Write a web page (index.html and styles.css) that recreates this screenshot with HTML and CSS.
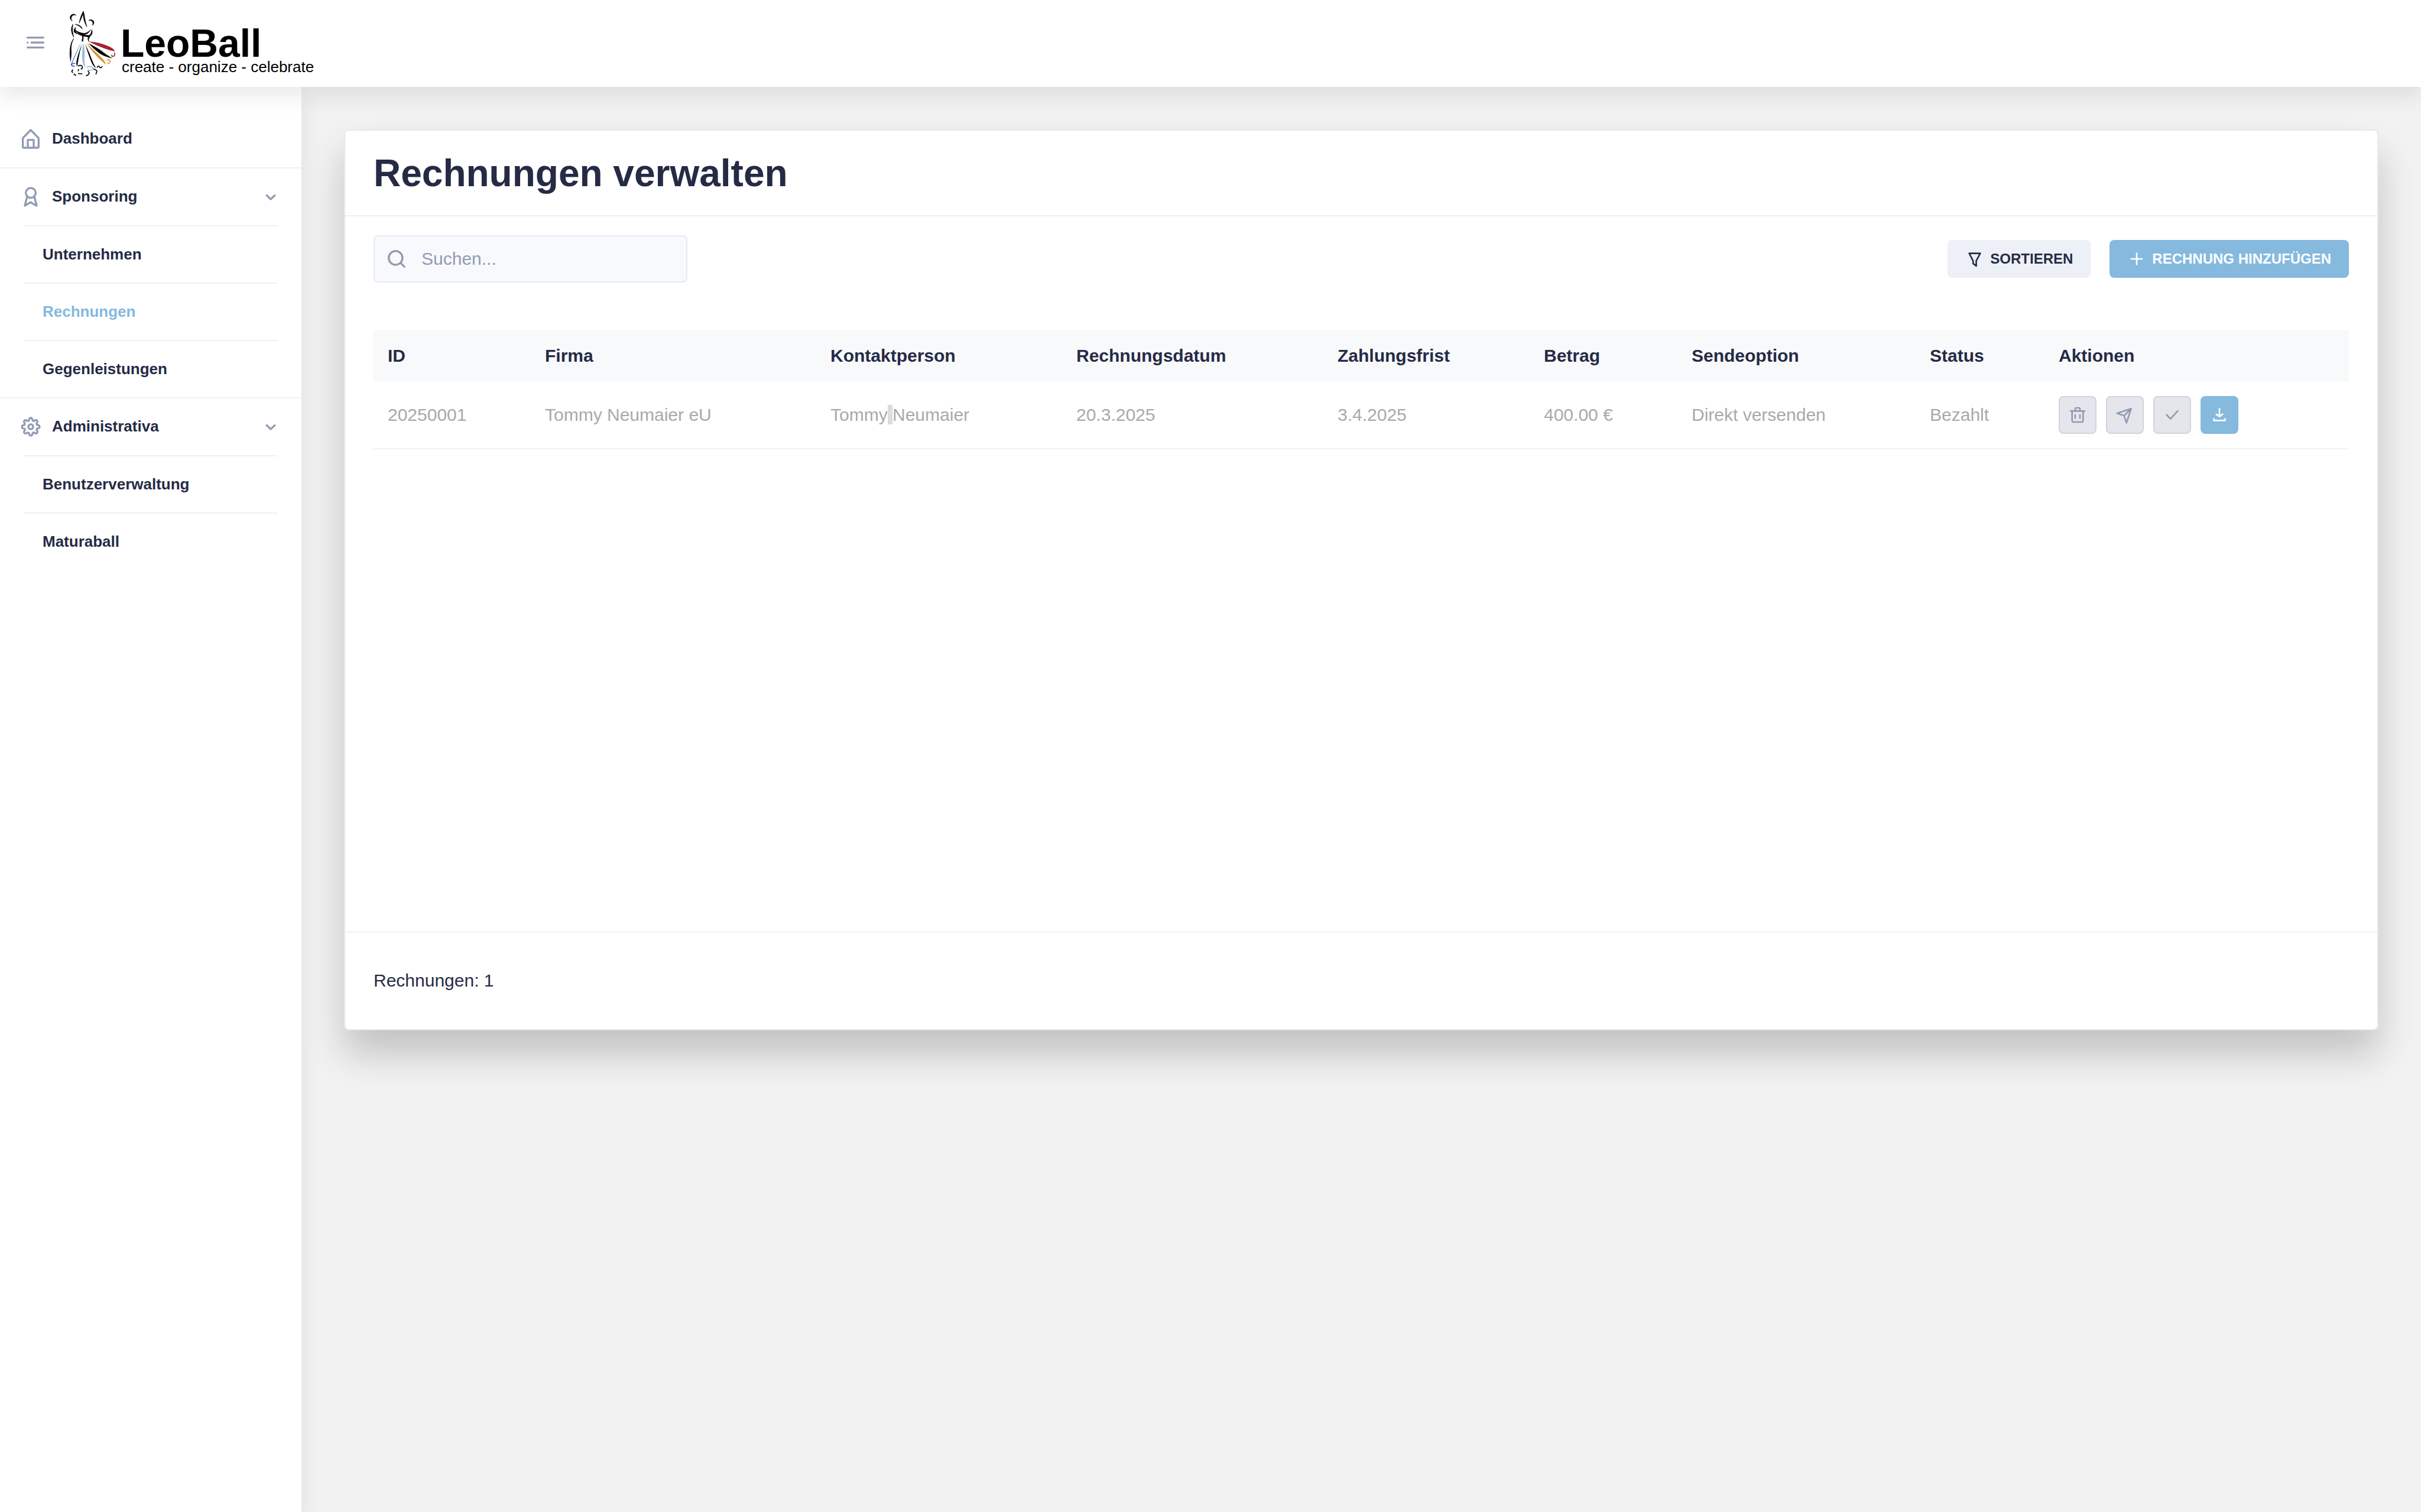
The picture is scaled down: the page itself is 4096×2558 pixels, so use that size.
FILE: index.html
```html
<!DOCTYPE html>
<html lang="de">
<head>
<meta charset="utf-8">
<meta name="viewport" content="width=device-width, initial-scale=1">
<title>LeoBall – Rechnungen verwalten</title>
<link rel="stylesheet" href="styles.css">
</head>
<body>
<header class="header">
  <button class="menu-toggle" type="button" aria-label="Menü">
    <svg class="icon" viewBox="0 0 24 24"><circle cx="4" cy="12" r="1"/><rect x="7" y="11" width="14" height="2" rx="1"/><rect x="3" y="16" width="18" height="2" rx="1"/><rect x="3" y="6" width="18" height="2" rx="1"/></svg>
  </button>
  <a class="logo" href="#">
    <svg class="logo-figure" viewBox="50 20 246 336" aria-hidden="true">
      <path class="body" d="M88 46Q72 34 61 48Q52 62 68 76Q60 62 66 52Q74 42 88 46Z"/>
      <path class="body" d="M125 27Q110 50 104 86Q116 62 126 32Z"/>
      <path class="body" d="M125 27Q130 40 132 60Q136 85 143 105Q130 85 126 60Q124 40 122 34Z"/>
      <path class="body" d="M152 72Q168 64 178 78Q182 88 172 98Q176 84 170 78Q162 70 152 72Z"/>
      <path class="body" d="M72 92Q54 120 76 158Q66 122 72 92Z"/>
      <path class="body" d="M84 92Q112 94 120 116Q104 98 84 92Z"/>
      <path class="body" d="M86 108Q74 118 78 130Q80 136 92 140Q80 124 86 108Z"/>
      <path class="body" d="M80 120Q100 134 124 138Q144 140 162 120Q148 146 124 145Q98 142 80 120Z"/>
      <path class="body" d="M82 132Q110 148 158 149L156 157Q110 154 82 132Z"/>
      <path class="body" d="M168 120Q176 140 157 156Q150 166 152 180Q144 166 152 154Q168 138 168 120Z"/>
      <path class="body" d="M120 152Q122 165 117 178L123 178Q126 165 125 152Z"/>
      <path class="body" d="M76 164Q48 200 60 280Q66 240 63 220Q62 190 76 164Z"/>
      <path class="blue" d="M116 180Q92 226 62 296Q66 300 72 280Q96 226 116 180Z"/>
      <path class="line blue-line" d="M63 296Q66 306 82 305M84 291Q68 290 66 297"/>
      <path d="M119 192Q106 230 100 270L94 306Q88 300 90 280Q98 240 119 192Z"/>
      <path class="sky" d="M126 188Q134 230 130 270Q130 292 136 312Q120 296 119 260Q118 220 126 188Z"/>
      <path d="M134 192Q158 240 176 290L190 316Q172 302 164 280Q150 246 134 192Z"/>
      <path class="amber" d="M140 186Q180 226 218 262Q236 280 240 298Q216 278 196 258Q168 230 140 186Z"/>
      <path class="line amber-line" d="M244 275Q260 268 262 279Q259 293 246 290"/>
      <path d="M150 188Q200 212 240 244L274 266Q230 256 204 238Q178 218 150 188Z"/>
      <path class="red" d="M152 180Q200 183 242 199Q278 212 286 230Q256 224 230 214Q190 200 152 180Z"/>
      <path class="line red-line" d="M283 236Q287 252 276 256Q266 253 270 247"/>
      <path class="line" d="M98 304Q116 296 120 308Q122 318 112 320M72 322L66 332L72 338M76 344L88 353M102 320L98 330M98 342L120 344M148 328L155 340Q150 352 138 354M176 318L192 326Q196 334 188 346M194 312Q204 298 208 311Q214 316 222 306"/>
      <path class="line sky-line" d="M142 312Q160 300 172 312Q174 324 158 326Q150 326 148 321"/>
    </svg>
    <span class="logo-text">
      <strong class="logo-name">LeoBall</strong>
      <span class="logo-claim">create - organize - celebrate</span>
    </span>
  </a>
</header>

<div class="layout">
  <nav class="sidebar">
    <ul class="menu">
      <li class="menu-group">
        <a class="menu-item" href="#">
          <svg class="icon" viewBox="0 0 24 24"><path d="M20.42 10.18L12.71 2.3a1 1 0 0 0-1.42 0l-7.71 7.89A2 2 0 0 0 3 11.62V20a2 2 0 0 0 1.89 2h14.22A2 2 0 0 0 21 20v-8.38a2.07 2.07 0 0 0-.58-1.44zM10 20v-6h4v6zm9 0h-3v-7a1 1 0 0 0-1-1H9a1 1 0 0 0-1 1v7H5v-8.42l7-7.15 7 7.19z"/></svg>
          <span class="menu-title">Dashboard</span>
        </a>
      </li>
      <li class="menu-group">
        <a class="menu-item" href="#">
          <svg class="icon" viewBox="0 0 24 24"><path d="M19 20.75l-2.31-9A5.94 5.94 0 0 0 18 8 6 6 0 0 0 6 8a5.94 5.94 0 0 0 1.34 3.77L5 20.75a1 1 0 0 0 1.48 1.11l5.33-3.13 5.68 3.14A.91.91 0 0 0 18 22a1 1 0 0 0 1-1.25zM12 4a4 4 0 1 1-4 4 4 4 0 0 1 4-4zm.31 12.71a1 1 0 0 0-1 0l-3.75 2.2L9 13.21a5.94 5.94 0 0 0 5.92 0L16.45 19z"/></svg>
          <span class="menu-title">Sponsoring</span>
          <svg class="icon" viewBox="0 0 24 24"><path d="M12 15.5a1 1 0 0 1-.71-.29l-4-4a1 1 0 1 1 1.42-1.42L12 13.1l3.3-3.18a1 1 0 1 1 1.38 1.44l-4 3.86a1 1 0 0 1-.68.28z"/></svg>
        </a>
        <ul class="submenu">
          <li><a class="submenu-item" href="#">Unternehmen</a></li>
          <li><a class="submenu-item active" href="#" aria-current="page">Rechnungen</a></li>
          <li><a class="submenu-item" href="#">Gegenleistungen</a></li>
        </ul>
      </li>
      <li class="menu-group">
        <a class="menu-item" href="#">
          <svg class="icon" viewBox="0 0 24 24"><g class="gear" transform="translate(12 12) scale(.818) translate(-12 -12)"><circle cx="12" cy="12" r="3"/><path d="M19.4 15a1.65 1.65 0 0 0 .33 1.82l.06.06a2 2 0 0 1 0 2.83 2 2 0 0 1-2.83 0l-.06-.06a1.65 1.65 0 0 0-1.82-.33 1.65 1.65 0 0 0-1 1.51V21a2 2 0 0 1-2 2 2 2 0 0 1-2-2v-.09A1.65 1.65 0 0 0 9 19.4a1.65 1.65 0 0 0-1.82.33l-.06.06a2 2 0 0 1-2.83 0 2 2 0 0 1 0-2.83l.06-.06a1.65 1.65 0 0 0 .33-1.82 1.65 1.65 0 0 0-1.51-1H3a2 2 0 0 1-2-2 2 2 0 0 1 2-2h.09A1.65 1.65 0 0 0 4.6 9a1.65 1.65 0 0 0-.33-1.82l-.06-.06a2 2 0 0 1 0-2.83 2 2 0 0 1 2.83 0l.06.06a1.65 1.65 0 0 0 1.82.33H9a1.65 1.65 0 0 0 1-1.51V3a2 2 0 0 1 2-2 2 2 0 0 1 2 2v.09a1.65 1.65 0 0 0 1 1.51 1.65 1.65 0 0 0 1.82-.33l.06-.06a2 2 0 0 1 2.83 0 2 2 0 0 1 0 2.83l-.06.06a1.65 1.65 0 0 0-.33 1.82V9a1.65 1.65 0 0 0 1.51 1H21a2 2 0 0 1 2 2 2 2 0 0 1-2 2h-.09a1.65 1.65 0 0 0-1.51 1z"/></g></svg>
          <span class="menu-title">Administrativa</span>
          <svg class="icon" viewBox="0 0 24 24"><path d="M12 15.5a1 1 0 0 1-.71-.29l-4-4a1 1 0 1 1 1.42-1.42L12 13.1l3.3-3.18a1 1 0 1 1 1.38 1.44l-4 3.86a1 1 0 0 1-.68.28z"/></svg>
        </a>
        <ul class="submenu">
          <li><a class="submenu-item" href="#">Benutzerverwaltung</a></li>
          <li><a class="submenu-item" href="#">Maturaball</a></li>
        </ul>
      </li>
    </ul>
  </nav>

  <main class="content">
    <section class="card">
      <div class="card-header"><h1>Rechnungen verwalten</h1></div>
      <div class="card-body">
        <div class="toolbar">
          <label class="search">
            <svg class="icon" viewBox="0 0 24 24"><path d="M20.71 19.29l-3.4-3.39A7.92 7.92 0 0 0 19 11a8 8 0 1 0-8 8 7.92 7.92 0 0 0 4.9-1.69l3.39 3.4a1 1 0 0 0 1.42 0 1 1 0 0 0 0-1.42zM5 11a6 6 0 1 1 6 6 6 6 0 0 1-6-6z"/></svg>
            <input type="text" placeholder="Suchen..." aria-label="Suchen">
          </label>
          <div class="toolbar-actions">
            <button class="btn btn-basic" type="button">
              <svg class="icon-small" viewBox="0 0 24 24"><path d="M13.9 22a1 1 0 0 1-.6-.2l-4-3.05a1 1 0 0 1-.39-.8v-3.27l-4.8-9.22A1 1 0 0 1 5 4h14a1 1 0 0 1 .86.49 1 1 0 0 1 0 1l-5 9.21V21a1 1 0 0 1-.55.9 1 1 0 0 1-.41.1zm-3-4.54l2 1.53v-4.55A1 1 0 0 1 13 14l4.3-8H6.64l4.13 8a1 1 0 0 1 .11.46z"/></svg>
              SORTIEREN
            </button>
            <button class="btn btn-primary" type="button">
              <svg class="icon-small" viewBox="0 0 24 24"><path d="M19 11h-6V5a1 1 0 0 0-2 0v6H5a1 1 0 0 0 0 2h6v6a1 1 0 0 0 2 0v-6h6a1 1 0 0 0 0-2z"/></svg>
              RECHNUNG HINZUFÜGEN
            </button>
          </div>
        </div>
        <div class="table-area">
          <table class="table">
            <colgroup>
              <col class="col-id"><col class="col-company"><col class="col-contact"><col class="col-date"><col class="col-due"><col class="col-amount"><col class="col-send"><col class="col-status"><col class="col-actions">
            </colgroup>
            <thead>
              <tr><th>ID</th><th>Firma</th><th>Kontaktperson</th><th>Rechnungsdatum</th><th>Zahlungsfrist</th><th>Betrag</th><th>Sendeoption</th><th>Status</th><th>Aktionen</th></tr>
            </thead>
            <tbody>
              <tr>
                <td>20250001</td>
                <td>Tommy Neumaier eU</td>
                <td>Tommy<span class="selected"> </span>Neumaier</td>
                <td>20.3.2025</td>
                <td>3.4.2025</td>
                <td>400.00 €</td>
                <td>Direkt versenden</td>
                <td>Bezahlt</td>
                <td>
                  <div class="row-actions">
                    <button class="icon-btn" type="button" disabled aria-label="Löschen"><svg class="icon-small" viewBox="0 0 24 24"><path d="M21 6h-5V4.33A2.42 2.42 0 0 0 13.5 2h-3A2.42 2.42 0 0 0 8 4.33V6H3a1 1 0 0 0 0 2h1v11a3 3 0 0 0 3 3h10a3 3 0 0 0 3-3V8h1a1 1 0 0 0 0-2zM10 4.33c0-.16.21-.33.5-.33h3c.29 0 .5.17.5.33V6h-4zM18 19a1 1 0 0 1-1 1H7a1 1 0 0 1-1-1V8h12z"/><path d="M9 17a1 1 0 0 0 1-1v-4a1 1 0 0 0-2 0v4a1 1 0 0 0 1 1zM15 17a1 1 0 0 0 1-1v-4a1 1 0 0 0-2 0v4a1 1 0 0 0 1 1z"/></svg></button>
                    <button class="icon-btn" type="button" disabled aria-label="Senden"><svg class="icon-small" viewBox="0 0 24 24"><path d="M21 4a1.31 1.31 0 0 0-.06-.27v-.09a1 1 0 0 0-.2-.3 1 1 0 0 0-.29-.19h-.09a.86.86 0 0 0-.31-.15H20a1 1 0 0 0-.3 0l-18 6a1 1 0 0 0 0 1.9l8.53 2.84 2.84 8.53a1 1 0 0 0 1.9 0l6-18A1 1 0 0 0 21 4zm-4.7 2.29l-5.57 5.57L5.16 10zM14 18.84l-1.86-5.57 5.57-5.57z"/></svg></button>
                    <button class="icon-btn" type="button" disabled aria-label="Als bezahlt markieren"><svg class="icon-small" viewBox="0 0 24 24"><path d="M9.86 18a1 1 0 0 1-.73-.32l-4.86-5.17a1 1 0 1 1 1.46-1.37l4.12 4.39 8.41-9.2a1 1 0 1 1 1.48 1.34l-9.14 10a1 1 0 0 1-.73.33z"/></svg></button>
                    <button class="icon-btn icon-btn-primary" type="button" aria-label="Herunterladen"><svg class="icon-small" viewBox="0 0 24 24"><rect x="4" y="18" width="16" height="2" rx="1"/><rect x="3" y="17" width="4" height="2" rx="1" transform="rotate(-90 5 18)"/><rect x="17" y="17" width="4" height="2" rx="1" transform="rotate(-90 19 18)"/><path d="M12 15a1 1 0 0 1-.58-.18l-4-2.82a1 1 0 0 1-.24-1.39 1 1 0 0 1 1.4-.24L12 12.76l3.4-2.56a1 1 0 0 1 1.2 1.6l-4 3a1 1 0 0 1-.6.2z"/><path d="M12 13a1 1 0 0 1-1-1V4a1 1 0 0 1 2 0v8a1 1 0 0 1-1 1z"/></svg></button>
                  </div>
                </td>
              </tr>
            </tbody>
          </table>
        </div>
      </div>
      <div class="card-footer">Rechnungen: 1</div>
    </section>
  </main>
</div>
</body>
</html>
```
FILE: styles.css
```css
*,
*::before,
*::after {
  box-sizing: border-box;
}

body {
  margin: 0;
  min-height: 100vh;
  display: flex;
  flex-direction: column;
  background: #f2f2f2;
  color: #252b45;
  font-family: "Liberation Sans", Helvetica, Arial, sans-serif;
  font-size: 30px;
  line-height: 40px;
}

ul {
  list-style: none;
  margin: 0;
  padding: 0;
}

a {
  color: inherit;
  text-decoration: none;
}

button,
input {
  font: inherit;
  color: inherit;
  border: 0;
  margin: 0;
  padding: 0;
  background: none;
}

svg {
  display: block;
  flex: none;
  fill: currentColor;
}

.icon {
  width: 40px;
  height: 40px;
  color: #929bb3;
}

.icon-small {
  width: 32px;
  height: 32px;
}

/* Header */
.header {
  position: relative;
  z-index: 2;
  display: flex;
  align-items: flex-start;
  gap: 36px;
  height: 147px;
  padding: 0 40px;
  background: #fff;
  box-shadow: 0 16px 32px rgba(44, 51, 73, 0.1);
}

.menu-toggle {
  margin-top: 52px;
}

.logo {
  display: flex;
  align-items: flex-start;
  gap: 6px;
  color: #000;
}

.logo-figure {
  width: 82px;
  height: 112px;
  margin-top: 17px;
}

.logo-figure .body {
  stroke: #000;
  stroke-width: 2;
  stroke-linejoin: round;
}

.logo-figure .line {
  fill: none;
  stroke: #000;
  stroke-width: 5;
}

.logo-figure .blue { fill: #2b5fb0; }
.logo-figure .sky { fill: #93bbdc; }
.logo-figure .amber { fill: #d8972f; }
.logo-figure .red { fill: #a32431; }
.logo-figure .blue-line { stroke: #2b5fb0; }
.logo-figure .sky-line { stroke: #93bbdc; }
.logo-figure .amber-line { stroke: #d8972f; }
.logo-figure .red-line { stroke: #a32431; }

.logo-text {
  display: flex;
  flex-direction: column;
  padding-top: 47px;
  white-space: nowrap;
}

.logo-name {
  font-size: 66px;
  line-height: 52px;
}

.logo-claim {
  padding-left: 2px;
  font-size: 26px;
  line-height: 28px;
}

/* Layout */
.layout {
  flex: 1;
  display: flex;
}

.sidebar {
  position: relative;
  z-index: 1;
  flex: none;
  width: 510px;
  padding-top: 40px;
  background: #fff;
  box-shadow: 0 16px 32px rgba(44, 51, 73, 0.1);
  font-size: 26px;
  font-weight: 700;
  line-height: 32px;
}

.menu-group {
  border-bottom: 2px solid #edf1f7;
}

.menu-group:last-child {
  border-bottom: 0;
}

.menu-item {
  display: flex;
  align-items: center;
  gap: 16px;
  height: 96px;
  padding: 0 32px;
}

.menu-title {
  flex: 1;
  padding-bottom: 2px;
}

.submenu {
  padding: 0 40px;
}

.submenu li {
  border-top: 2px solid #edf1f7;
}

.submenu-item {
  display: block;
  padding: 31px 32px 32px;
}

.submenu-item.active {
  color: #85b9de;
}

.gear {
  fill: none;
  stroke: currentColor;
  stroke-width: 2.44;
}

.content {
  flex: 1;
  min-width: 0;
  padding: 72px;
}

/* Card */
.card {
  background: #fff;
  border: 2px solid #e4e9f2;
  border-radius: 8px;
  box-shadow: 0 40px 64px rgba(0, 0, 0, 0.2);
}

.card-header {
  padding: 32px 48px 31px;
  border-bottom: 2px solid #edf1f7;
}

.card-header h1 {
  margin: 0;
  font-size: 64px;
  line-height: 80px;
}

.card-body {
  padding: 32px 48px;
}

.card-footer {
  padding: 61px 48px 62px;
  border-top: 2px solid #edf1f7;
}

.toolbar {
  display: flex;
  align-items: center;
  justify-content: space-between;
  margin-bottom: 80px;
}

.search {
  display: flex;
  align-items: center;
  gap: 22px;
  width: 531px;
  height: 80px;
  padding: 0 17px;
  background: #f7f9fc;
  border: 2px solid #e4e9f2;
  border-radius: 8px;
}

.search input {
  flex: 1;
  min-width: 0;
  height: 40px;
  outline: 0;
}

.search input::placeholder {
  color: #929bb3;
  opacity: 1;
}

.toolbar-actions {
  display: flex;
  gap: 32px;
}

.btn {
  display: flex;
  align-items: center;
  gap: 10px;
  height: 64px;
  padding: 0 30px;
  border-radius: 8px;
  font-size: 24px;
  font-weight: 700;
  line-height: 32px;
  white-space: nowrap;
}

.btn-basic {
  background: #edf0f6;
}

.btn-primary {
  background: #85b9de;
  color: #fff;
}

/* Table */
.table-area {
  min-height: 986px;
}

.table {
  width: 100%;
  border-collapse: separate;
  border-spacing: 0;
}

.col-id { width: 266px; }
.col-company { width: 483px; }
.col-contact { width: 416px; }
.col-date { width: 442px; }
.col-due { width: 349px; }
.col-amount { width: 250px; }
.col-send { width: 403px; }
.col-status { width: 218px; }
.col-actions { width: 515px; }

.table th,
.table td {
  padding: 24px;
  text-align: left;
  white-space: nowrap;
}

.table th {
  background: #f8f9fb;
  font-weight: 700;
}

.table td {
  color: #a9a9a9;
  border-bottom: 2px solid #f2f2f2;
}

.selected {
  background: #dcdcdc;
}

.row-actions {
  display: flex;
  gap: 16px;
}

.icon-btn {
  display: flex;
  align-items: center;
  justify-content: center;
  width: 64px;
  height: 64px;
  border: 2px solid #d0d4dd;
  border-radius: 8px;
  background: #e5e6ec;
  color: #929bb3;
}

.icon-btn-primary {
  border-color: #85b9de;
  background: #85b9de;
  color: #fff;
}
```
